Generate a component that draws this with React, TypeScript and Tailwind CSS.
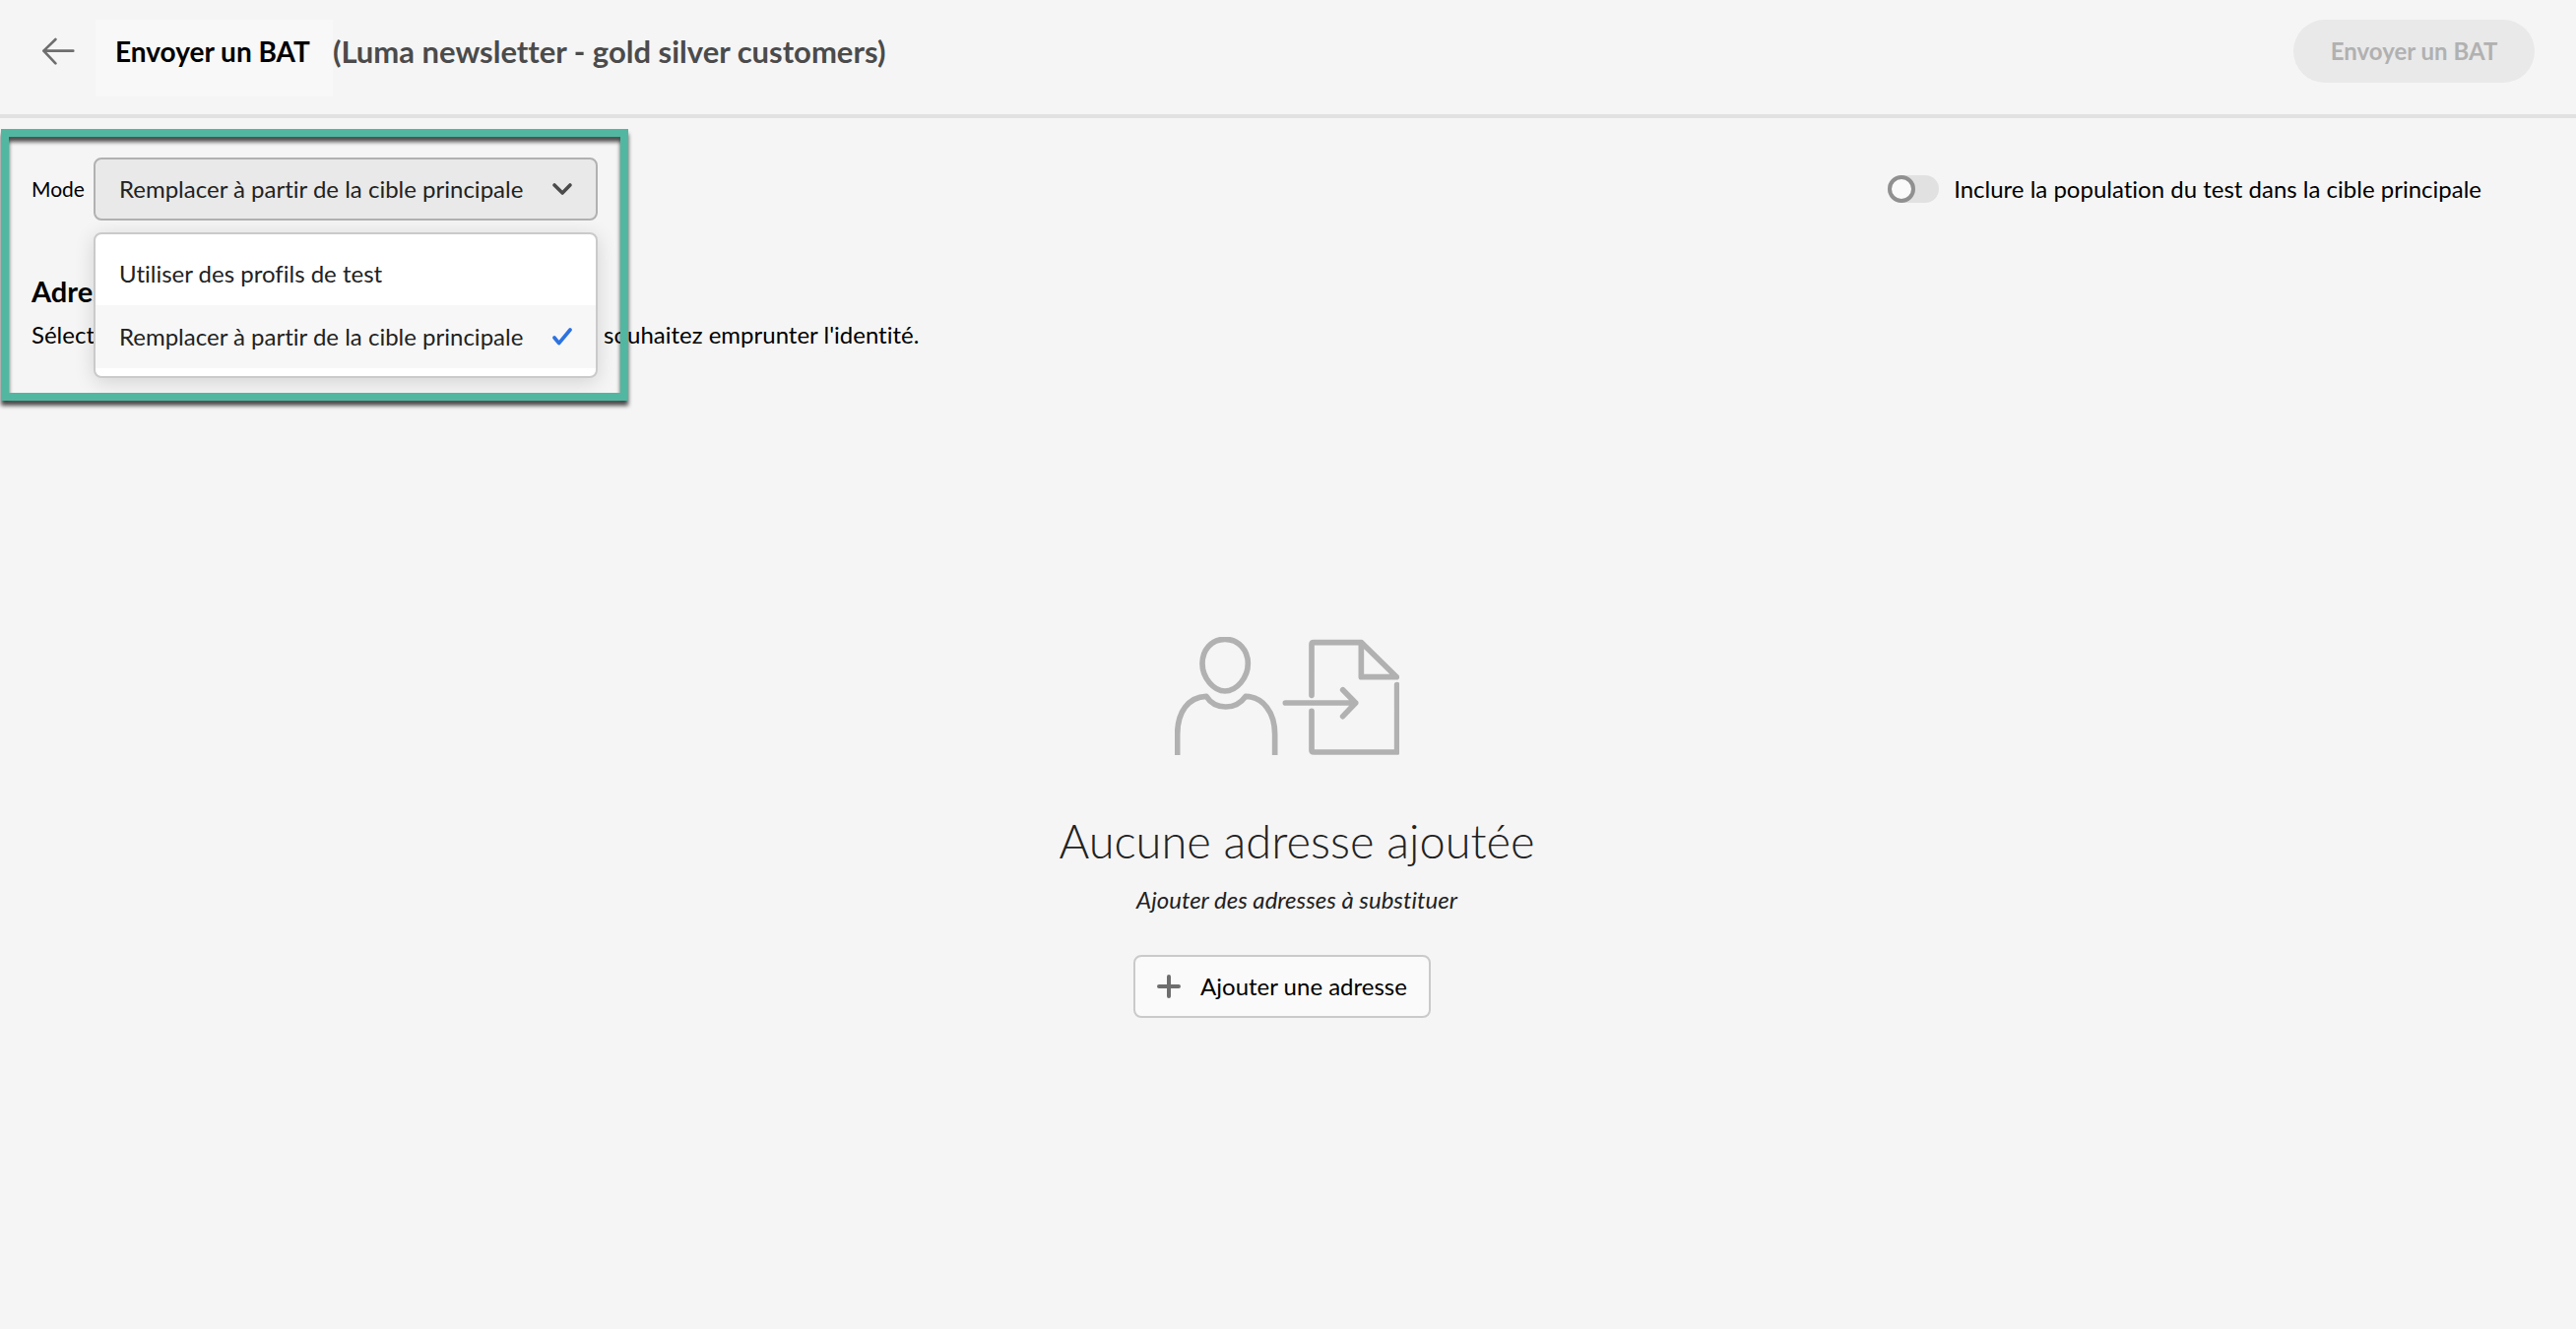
import React, { useState } from "react";

const MODES = [
  { value: "profiles", label: "Utiliser des profils de test" },
  { value: "target", label: "Remplacer à partir de la cible principale" },
];

function BackIcon() {
  return (
    <svg viewBox="126 112 102 86" className="h-7 w-[34px]" fill="none" stroke="#6e6e6e" strokeWidth="8" strokeLinecap="round" strokeLinejoin="round" aria-hidden="true">
      <path d="M132 154H224M169 118L132 154L169 193" />
    </svg>
  );
}

function ChevronIcon() {
  return (
    <svg viewBox="302 557 61 37" className="pointer-events-none absolute top-[26px] right-[26px] h-3 w-5" fill="none" stroke="#4b4b4b" strokeWidth="11" strokeLinecap="round" strokeLinejoin="round" aria-hidden="true">
      <path d="M308 563L333 588L357 563" />
    </svg>
  );
}

function CheckIcon() {
  return (
    <svg viewBox="300 336 60 54" className="h-[18px] w-5 shrink-0" fill="none" stroke="#2d73e0" strokeWidth="11" strokeLinecap="round" strokeLinejoin="round" aria-hidden="true">
      <path d="M306 366L320 383L354 342" />
    </svg>
  );
}

function PlusIcon() {
  return (
    <svg viewBox="0 0 24 24" className="size-6" fill="none" stroke="#6e6e6e" strokeWidth="4" strokeLinecap="round" aria-hidden="true">
      <path d="M2 12H22M12 2V22" />
    </svg>
  );
}

function ImportProfileIllustration() {
  return (
    <svg viewBox="99 81 684 360" className="mr-[2px] h-[120px] w-[228px]" fill="none" stroke="#b1b1b1" strokeWidth="17" strokeLinejoin="round" aria-hidden="true">
      <path d="M252 88C210 88 183 122 183 162C183 206 218 246 252 246C287 246 322 206 322 162C322 122 294 88 252 88Z" />
      <path d="M107 441V378C107 310 140 264 195 262C208 283 230 294 254 294C280 294 300 283 315 262C368 264 404 310 404 378V441" />
      <g strokeLinecap="round">
        <path d="M516 259V104Q516 98 522 98H668L775 203H667V98" />
        <path d="M776 227V432H522Q516 432 516 426V307" />
        <path d="M436 282H650M611 242L650 282L611 323" />
      </g>
    </svg>
  );
}

export default function App() {
  const [mode, setMode] = useState("target");

  return (
    <div className="min-h-screen bg-[#f5f5f5] font-['Lato',sans-serif] text-2xl text-black [font-variant-ligatures:none]">
      <header className="flex items-start border-b-4 border-[#e1e1e1] px-[42px] pt-5 pb-[18px]">
        <button type="button" aria-label="Retour" className="flex h-16 items-center">
          <BackIcon />
        </button>
        <h1 className="flex text-[31px] leading-16 font-bold text-[#4b4b4b]">
          <span className="ml-[21px] bg-[#f8f8f8] pr-[23px] pb-[14px] pl-5 text-[28px] text-black">Envoyer un BAT</span>
          <span>(Luma newsletter - gold silver customers)</span>
        </h1>
        <button type="button" disabled className="ml-auto h-16 w-[245px] rounded-full bg-[#e9e9e9] font-bold text-[#b1b1b1]">
          Envoyer un BAT
        </button>
      </header>

      <main className="relative">
        <div className="flex items-center pt-10 pr-[96px] pl-8">
          <label htmlFor="mode" className="w-[63px] text-[21px]">
            Mode
          </label>
          <div className="relative z-10">
            <select
              id="mode"
              value={mode}
              onChange={(e) => setMode(e.target.value)}
              className="block h-16 w-[512px] appearance-none rounded-lg border-2 border-[#b1b1b1] bg-[#e9e9e9] pl-6 text-[#222]"
            >
              {MODES.map((m) => (
                <option key={m.value} value={m.value}>
                  {m.label}
                </option>
              ))}
            </select>
            <ChevronIcon />
            <ul role="listbox" aria-label="Mode" className="absolute top-[76px] left-0 w-[512px] rounded-lg border-2 border-[#cacaca] bg-white py-2 shadow-[0_4px_20px_rgba(0,0,0,0.14)]">
              {MODES.map((m) => (
                <li key={m.value} role="option" aria-selected={m.value === mode}>
                  <button
                    type="button"
                    onClick={() => setMode(m.value)}
                    className={
                      m.value === mode
                        ? "flex h-16 w-full items-center justify-between bg-[#f7f7f7] pr-6 pl-6 text-[#222]"
                        : "flex h-16 w-full items-center justify-between pr-6 pl-6 text-[#222]"
                    }
                  >
                    {m.label}
                    {m.value === mode && <CheckIcon />}
                  </button>
                </li>
              ))}
            </ul>
          </div>
          <label className="ml-auto flex items-center gap-[15px]">
            <input
              type="checkbox"
              role="switch"
              className="h-7 w-[52px] appearance-none rounded-full bg-[#e1e1e1] before:block before:size-7 before:rounded-full before:border-4 before:border-[#909090] before:bg-[#fafafa] checked:before:ml-auto"
            />
            Inclure la population du test dans la cible principale
          </label>
        </div>

        <section className="mt-14 pl-8">
          <h2 className="text-[29px] leading-8 font-bold">Adresses</h2>
          <p className="mt-3 flex leading-8">
            <span className="w-[581px] shrink-0 overflow-hidden whitespace-nowrap">Sélectionnez les profils dont vous</span>
            <span>souhaitez emprunter l'identité.</span>
          </p>
        </section>

        <div className="pointer-events-none absolute top-[11px] left-px z-20 h-[276px] w-[637px] border-8 border-[#52b7a0] drop-shadow-[0_5px_2px_rgba(0,0,0,0.7)]" />

        <section className="mt-[291px] flex flex-col items-center">
          <ImportProfileIllustration />
          <div className="mt-[59px] pl-[18px] text-center text-[#222]">
            <h2 className="text-[47px] leading-14 font-light">Aucune adresse ajoutée</h2>
            <p className="mt-4 leading-8 italic">Ajouter des adresses à substituer</p>
          </div>
          <button type="button" className="mt-10 mr-3 flex h-16 items-center gap-5 rounded-lg border-2 border-[#cacaca] bg-[#fafafa] px-[22px]">
            <PlusIcon />
            Ajouter une adresse
          </button>
        </section>
      </main>
    </div>
  );
}
